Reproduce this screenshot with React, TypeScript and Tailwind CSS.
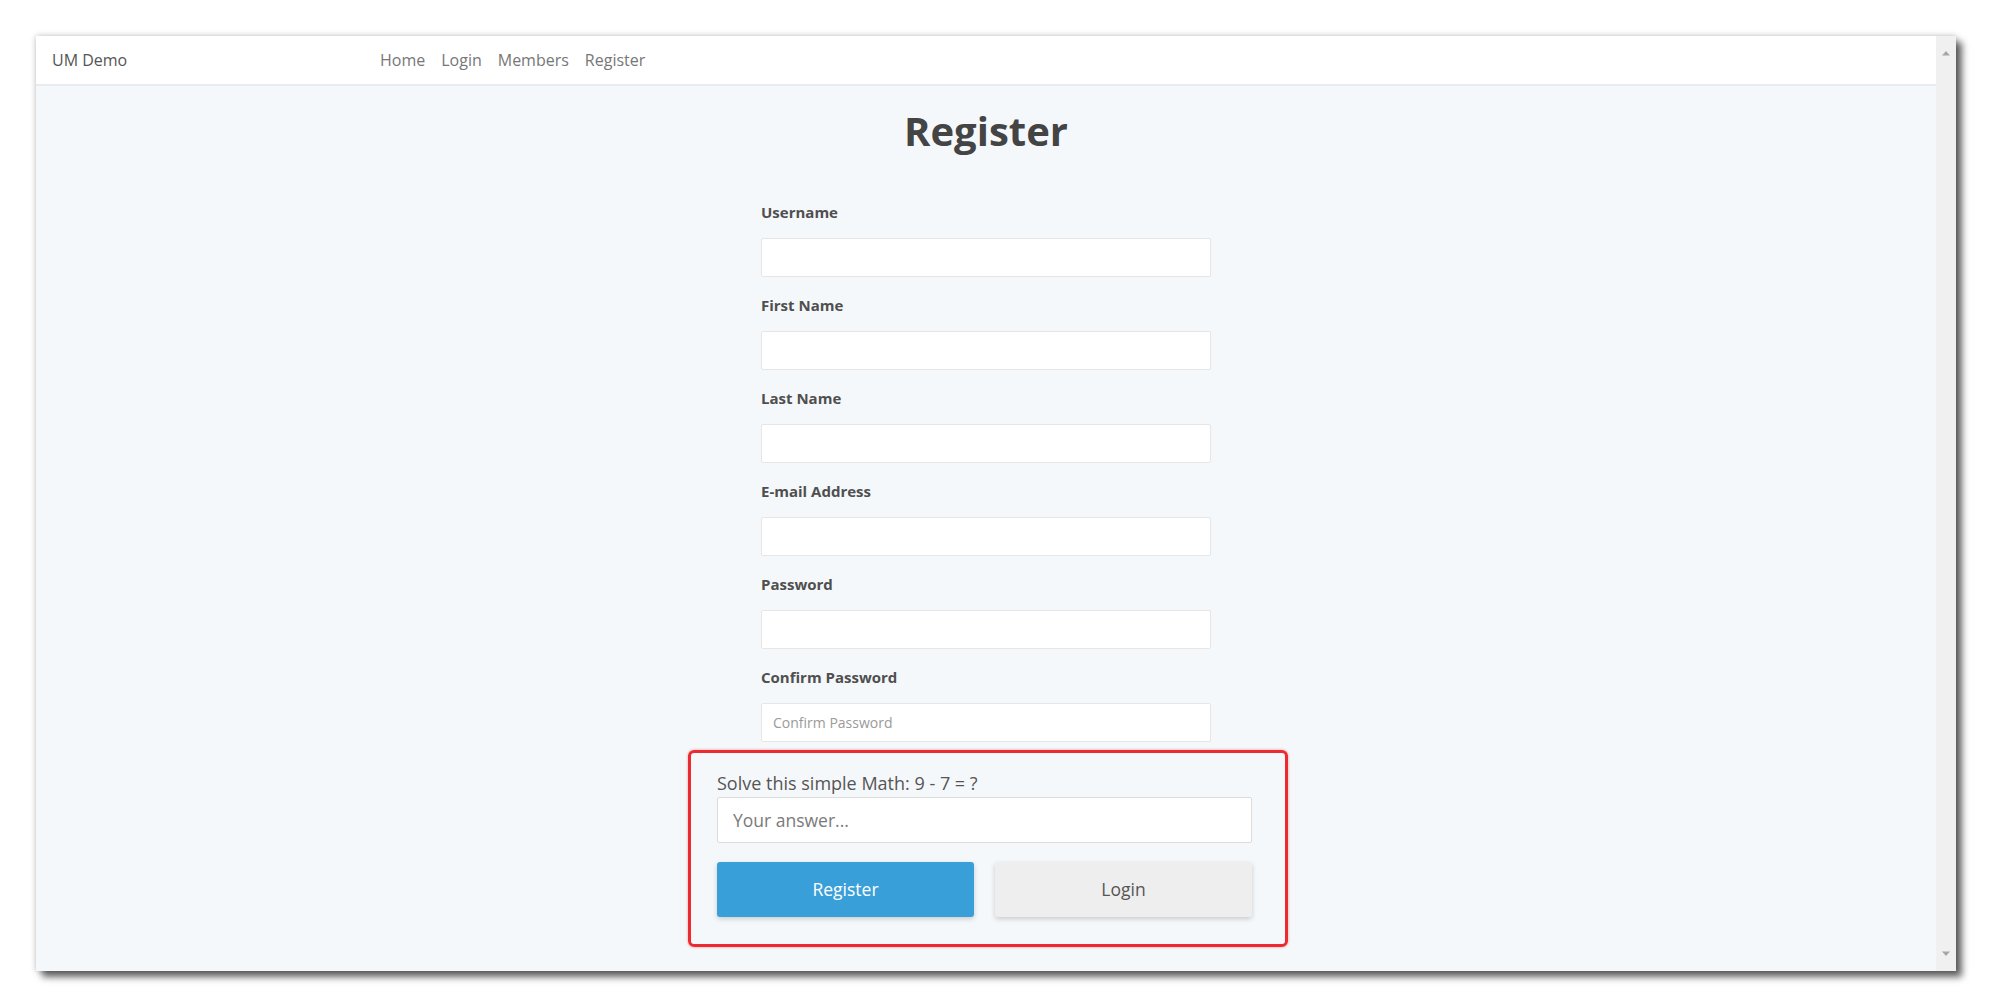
import React from 'react';

const fields = [
    { label: 'Username', placeholder: '' },
    { label: 'First Name', placeholder: '' },
    { label: 'Last Name', placeholder: '' },
    { label: 'E-mail Address', placeholder: '' },
    { label: 'Password', placeholder: '' },
    { label: 'Confirm Password', placeholder: 'Confirm Password' },
];

const Navbar = () => (
    <div className="flex items-center h-[50px] bg-white border-b-2 border-[#e8ecf0] pl-4 text-[16px]">
        <div className="w-[328px] text-[#555]">UM Demo</div>
        <nav className="flex items-center gap-[16px] text-[#777]">
            <span>Home</span>
            <span>Login</span>
            <span>Members</span>
            <span>Register</span>
        </nav>
    </div>
);

const Scrollbar = () => (
    <div className="w-[20px] bg-[#f0f0f0] flex flex-col items-center justify-between py-[14px]">
        <svg width="10" height="6" viewBox="0 0 10 6">
            <path d="M1 5.5 L5 1 L9 5.5 Z" fill="#a6a6a6" />
        </svg>
        <svg width="10" height="6" viewBox="0 0 10 6">
            <path d="M1 0.5 L5 5 L9 0.5 Z" fill="#a6a6a6" />
        </svg>
    </div>
);

export default function App() {
    return (
        <div className="min-h-screen bg-white pt-[36px] pl-[36px]" style={{ fontFamily: '"Open Sans", "Noto Sans", sans-serif' }}>
            <div className="w-[1920px] h-[935px] flex bg-[#f5f8fb] shadow-[0_0_6px_rgba(0,0,0,0.25),6px_6px_7px_rgba(0,0,0,0.6)]">
                <div className="flex-1 flex flex-col">
                    <Navbar />
                    <div className="flex flex-col items-center">
                        <h1 className="mt-[21px] text-[40px] leading-[48px] font-bold text-[#444]">Register</h1>

                        <div className="w-[450px] mt-[47px] flex flex-col">
                            {fields.map((f) => (
                                <div key={f.label} className="flex flex-col mb-[18px]">
                                    <label className="text-[15px] leading-[20px] font-bold text-[#4f4f4f] mb-[16px]">{f.label}</label>
                                    <input
                                        type="text"
                                        placeholder={f.placeholder}
                                        className="h-[39px] bg-white border border-[#e6e6e6] rounded-[2px] px-[11px] text-[14px] text-[#555] placeholder:text-[#9a9a9a] outline-none"
                                    />
                                </div>
                            ))}
                        </div>

                        <div className="-mt-[10px] ml-[4px] w-[600px] border-[3px] border-[#ec2a2f] rounded-[6px] shadow-[0_0_3px_rgba(236,42,47,0.45)] pt-[17px] pb-[27px] pl-[26px] pr-[33px]">
                            <div className="text-[18px] leading-[26px] text-[#555]">Solve this simple Math: 9 - 7 = ?</div>
                            <input
                                type="text"
                                placeholder="Your answer..."
                                className="mt-[1px] w-full h-[46px] bg-white border border-[#dcdcdc] rounded-[2px] px-[15px] text-[17.5px] text-[#555] placeholder:text-[#7a7a7a] outline-none"
                            />
                            <div className="mt-[19px] grid grid-cols-2 gap-[21px]">
                                <button className="h-[55px] rounded-[3px] bg-[#399fd9] text-white text-[17.5px] shadow-[0_2px_5px_rgba(0,0,0,0.18)]">
                                    Register
                                </button>
                                <button className="h-[55px] rounded-[3px] bg-[#eeeeee] text-[#555] text-[17.5px] shadow-[0_2px_5px_rgba(0,0,0,0.18)]">
                                    Login
                                </button>
                            </div>
                        </div>
                    </div>
                </div>
                <Scrollbar />
            </div>
        </div>
    );
}
